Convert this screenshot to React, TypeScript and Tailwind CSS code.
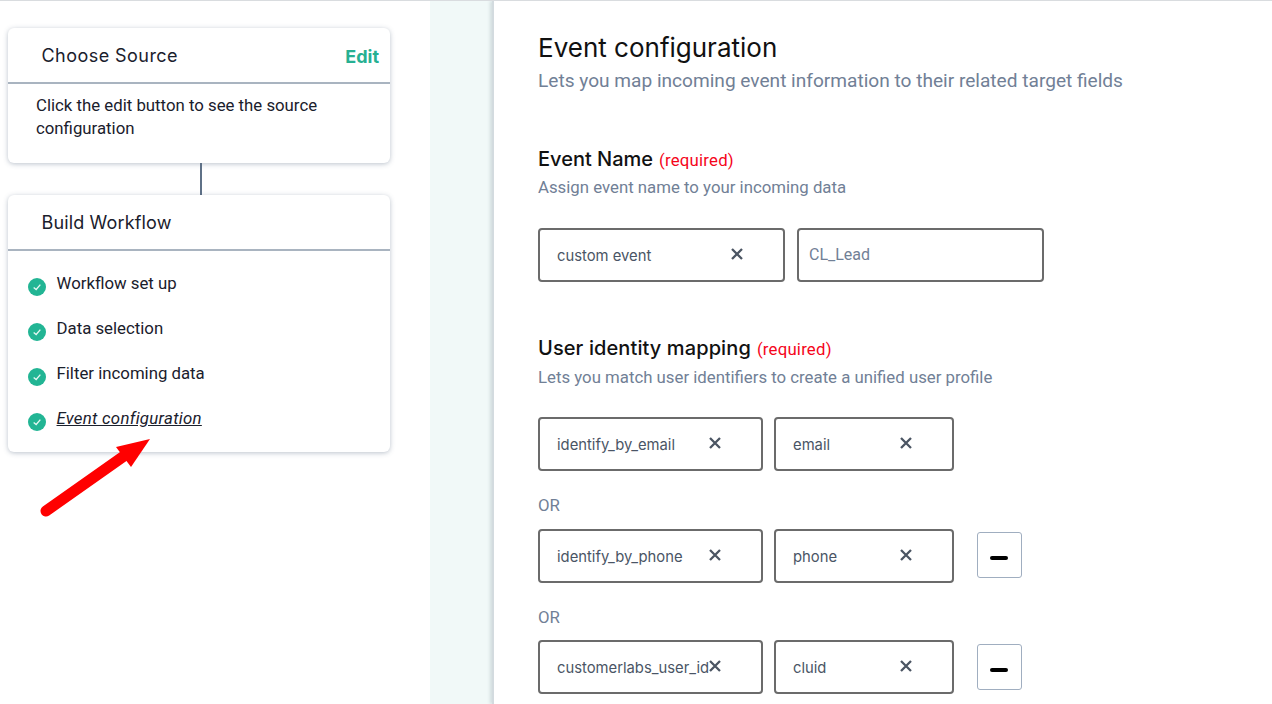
import React from "react";

const heading = "font-['Inter',sans-serif]";
const body = "font-['Roboto',sans-serif]";

function Cross({ className = "" }: { className?: string }) {
  return (
    <svg viewBox="0 0 12 12" className={`w-3 h-3 ${className}`} fill="none" stroke="#4b5563" strokeWidth="2.3">
      <path d="M1 1 L11 11 M11 1 L1 11" />
    </svg>
  );
}

function Check() {
  return (
    <span className="w-[18px] h-[18px] rounded-full bg-[#22b594] flex items-center justify-center shrink-0 mt-[7px]">
      <svg viewBox="0 0 12 12" className="w-[10px] h-[10px]" fill="none" stroke="#e5f7f2" strokeWidth="1.6">
        <path d="M2 6.5 L5 9 L10 3.2" />
      </svg>
    </span>
  );
}

function Field({ text, w, x }: { text: string; w: string; x: string }) {
  return (
    <div className={`${w} h-[54px] border-2 border-[#6b6b6b] rounded-[4px] flex items-center relative bg-white`}>
      <span className="pl-[17px] pt-[2px] font-['Inter',sans-serif] text-[14.8px] text-[#4a5565] whitespace-nowrap">{text}</span>
      <span className={`absolute top-[18px] ${x}`}>
        <Cross />
      </span>
    </div>
  );
}

function Minus({ mt }: { mt: string }) {
  return (
    <div className={`w-[45px] h-[46px] ml-[23px] ${mt} border border-[#a0aec0] rounded-[3px] flex items-center justify-center`}>
      <span className="block w-[18px] h-[4px] rounded-full bg-black mt-[6px] mr-[1px]" />
    </div>
  );
}

function Step({ label, active }: { label: string; active?: boolean }) {
  return (
    <div className="flex items-start gap-[10.5px] h-[45px]">
      <Check />
      <span className={`text-[16.8px] leading-[24px] text-[#1a202c] ${active ? "italic underline tracking-[0.28px]" : ""}`}>{label}</span>
    </div>
  );
}

export default function App() {
  return (
    <div className={`w-[1272px] h-[704px] overflow-hidden relative bg-white border-t border-[#d9dcdf] flex ${body}`}>
      <div className="w-[430px] shrink-0 pl-2 pt-[27px]">
        <div className="w-[382px] h-[135px] rounded-[6px] bg-white shadow-[0_1px_5px_rgba(60,80,110,0.35)]">
          <div className="h-[56px] border-b-2 border-[#a9b4c0] flex items-center justify-between pl-[33.5px] pr-[11px]">
            <span className={`${heading} text-[18px] text-[#1a202c] tracking-[0.45px]`}>Choose Source</span>
            <span className={`${heading} text-[18px] font-bold text-[#26b092] mt-[2px]`}>Edit</span>
          </div>
          <p className="pl-7 pr-12 pt-[10px] text-[16.8px] leading-[23px] text-[#1a202c]">
            Click the edit button to see the source configuration
          </p>
        </div>
        <div className="ml-[192px] w-[2px] h-8 bg-[#5f7187]" />
        <div className="w-[382px] h-[257px] rounded-[6px] bg-white shadow-[0_1px_5px_rgba(60,80,110,0.35)]">
          <div className="h-[56px] border-b-2 border-[#a9b4c0] flex items-center pl-[33.5px]">
            <span className={`${heading} text-[18px] text-[#1a202c] tracking-[0.15px]`}>Build Workflow</span>
          </div>
          <div className="pl-5 pt-[20px]">
            <Step label="Workflow set up" />
            <Step label="Data selection" />
            <Step label="Filter incoming data" />
            <Step label="Event configuration" active />
          </div>
        </div>
      </div>

      <div className="w-[62px] shrink-0 bg-[#f1f9f8]" />

      <div className="flex-1 border-l-2 border-[#d3dbdf] shadow-[-2px_0_3px_rgba(120,140,150,0.25)] pl-[44px] pt-[30px] bg-white">
        <h1 className={`${heading} text-[26px] leading-[34px] text-[#111]`}>Event configuration</h1>
        <p className="text-[19.1px] leading-[30px] text-[#718096] mt-[1px]">
          Lets you map incoming event information to their related target fields
        </p>

        <div className="mt-[48px] flex items-baseline gap-[6px] h-[27px]">
          <span className={`${heading} text-[20px] font-medium text-[#111]`}>Event Name</span>
          <span className="text-[16.8px] text-[#f5051b] tracking-[0.2px]">(required)</span>
        </div>
        <p className="text-[16.8px] leading-[24px] text-[#718096] mt-[4px]">Assign event name to your incoming data</p>
        <div className="flex gap-3 mt-[29px]">
          <Field text="custom event" w="w-[247px]" x="left-[191px]" />
          <div className="w-[247px] h-[54px] border-2 border-[#6b6b6b] rounded-[4px] flex items-center pl-[10px] text-[16px] text-[#718096]">CL_Lead</div>
        </div>

        <div className="mt-[51px] flex items-baseline gap-[6px] h-[27px]">
          <span className={`${heading} text-[20px] tracking-[0.1px] font-medium text-[#111]`}>User identity mapping</span>
          <span className="text-[16.8px] text-[#f5051b] tracking-[0.2px]">(required)</span>
        </div>
        <p className="text-[16.8px] leading-[24px] text-[#718096] mt-[5px]">Lets you match user identifiers to create a unified user profile</p>

        <div className="flex gap-[11px] mt-[28px]">
          <Field text="identify_by_email" w="w-[225px]" x="left-[169px]" />
          <Field text="email" w="w-[180px]" x="left-[124px]" />
        </div>
        <p className="text-[16.8px] leading-[24px] text-[#718096] mt-[22px] h-[36px]">OR</p>
        <div className="flex">
          <Field text="identify_by_phone" w="w-[225px]" x="left-[169px]" />
          <div className="w-[11px]" />
          <Field text="phone" w="w-[180px]" x="left-[124px]" />
          <Minus mt="mt-[3px]" />
        </div>
        <p className="text-[16.8px] leading-[24px] text-[#718096] mt-[22px] h-[35px]">OR</p>
        <div className="flex">
          <Field text="customerlabs_user_id" w="w-[225px]" x="left-[169px]" />
          <div className="w-[11px]" />
          <Field text="cluid" w="w-[180px]" x="left-[124px]" />
          <Minus mt="mt-[4px]" />
        </div>
      </div>

      <svg className="absolute left-0 top-[-1px] pointer-events-none" width="200" height="530" viewBox="0 0 200 530">
        <path d="M46 511 L124 456" stroke="#ff0000" strokeWidth="11" strokeLinecap="round" fill="none" />
        <polygon points="150,439 116,447 131,467" fill="#ff0000" />
      </svg>
    </div>
  );
}
